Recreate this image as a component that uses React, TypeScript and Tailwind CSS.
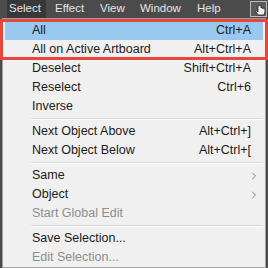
import { ChevronRight } from 'lucide-react';

type Item =
    | { kind: 'sep' }
    | { kind: 'item'; label: string; shortcut?: string; sub?: boolean; disabled?: boolean; active?: boolean };

const ITEMS: Item[] = [
    { kind: 'item', label: 'All', shortcut: 'Ctrl+A', active: true },
    { kind: 'item', label: 'All on Active Artboard', shortcut: 'Alt+Ctrl+A' },
    { kind: 'item', label: 'Deselect', shortcut: 'Shift+Ctrl+A' },
    { kind: 'item', label: 'Reselect', shortcut: 'Ctrl+6' },
    { kind: 'item', label: 'Inverse' },
    { kind: 'sep' },
    { kind: 'item', label: 'Next Object Above', shortcut: 'Alt+Ctrl+]' },
    { kind: 'item', label: 'Next Object Below', shortcut: 'Alt+Ctrl+[' },
    { kind: 'sep' },
    { kind: 'item', label: 'Same', sub: true },
    { kind: 'item', label: 'Object', sub: true },
    { kind: 'item', label: 'Start Global Edit', disabled: true },
    { kind: 'sep' },
    { kind: 'item', label: 'Save Selection...' },
    { kind: 'item', label: 'Edit Selection...', disabled: true },
];

// menu bar labels with the slot width each one takes
const MENUS = [
    { label: 'Select', w: 'w-[46px]' },
    { label: 'Effect', w: 'w-[45px]' },
    { label: 'View', w: 'w-[40px]' },
    { label: 'Window', w: 'w-[57px]' },
    { label: 'Help', w: 'w-[40px]' },
];

function HandIcon() {
    return (
        <svg width="18" height="16" viewBox="0 0 18 16" className="block">
            <rect x="0.5" y="0.5" width="16" height="15" fill="#5a5a5a" stroke="#bdbdbd" />
            <path
                d="M8 5 L8 11 L7 10 Q6 9.4 5.5 10.2 L8 14 L14 14 L15 10.5 L15 8 Q14.5 7.2 13.8 8 L13.8 7.5 Q13.2 6.7 12.5 7.5 L12.5 7 Q11.8 6.3 11 7 L11 5 Q9.5 3.8 8 5 Z"
                fill="#f2f2f2"
                stroke="#222"
                strokeWidth="0.8"
            />
        </svg>
    );
}

export default function App() {
    return (
        <div className="relative w-[268px] h-[268px] overflow-hidden bg-[#4b4b4b] text-[12.5px] font-['Liberation_Sans',Arial,sans-serif]">
            {/* Menu bar */}
            <div className="flex items-stretch h-[18px] pl-[7px] text-[11.5px] text-[#e6e6e6]">
                {MENUS.map((m) => (
                    <div key={m.label} className={'flex ' + m.w}>
                        <span
                            className={
                                m.label === 'Select'
                                    ? 'flex items-center pl-[2px] pr-[5px] bg-[#383838]'
                                    : 'flex items-center pl-[2px]'
                            }
                        >
                            {m.label}
                        </span>
                    </div>
                ))}
                <div className="ml-auto mt-[1px]">
                    <HandIcon />
                </div>
            </div>

            {/* Dropdown */}
            <div className="ml-[2px] w-[264px] bg-[#f0f0f0] border border-[#a0a0a0] pt-[2px] px-[2px]">
                {ITEMS.map((it, i) =>
                    it.kind === 'sep' ? (
                        <div key={i} className="h-[6px] flex items-center pl-[26px]">
                            <div className="w-full border-t border-[#d7d7d7] border-b border-b-white" />
                        </div>
                    ) : (
                        <div
                            key={i}
                            className={
                                'h-[19px] flex items-center pl-[27px] pr-[12px] ' +
                                (it.active ? 'bg-[#99c9ef] ' : '') +
                                (it.disabled ? 'text-[#8d8d8d]' : 'text-[#1b1b1b]')
                            }
                        >
                            <span className="flex-1">{it.label}</span>
                            {it.shortcut && <span>{it.shortcut}</span>}
                            {it.sub && <ChevronRight size={12} strokeWidth={1.4} className="text-[#555] -mr-[9px]" />}
                        </div>
                    )
                )}
            </div>

            {/* Red annotation box */}
            <div className="absolute left-0 top-[19px] w-[268px] h-[41px] border-[3px] border-[#e8453c]" />
        </div>
    );
}
